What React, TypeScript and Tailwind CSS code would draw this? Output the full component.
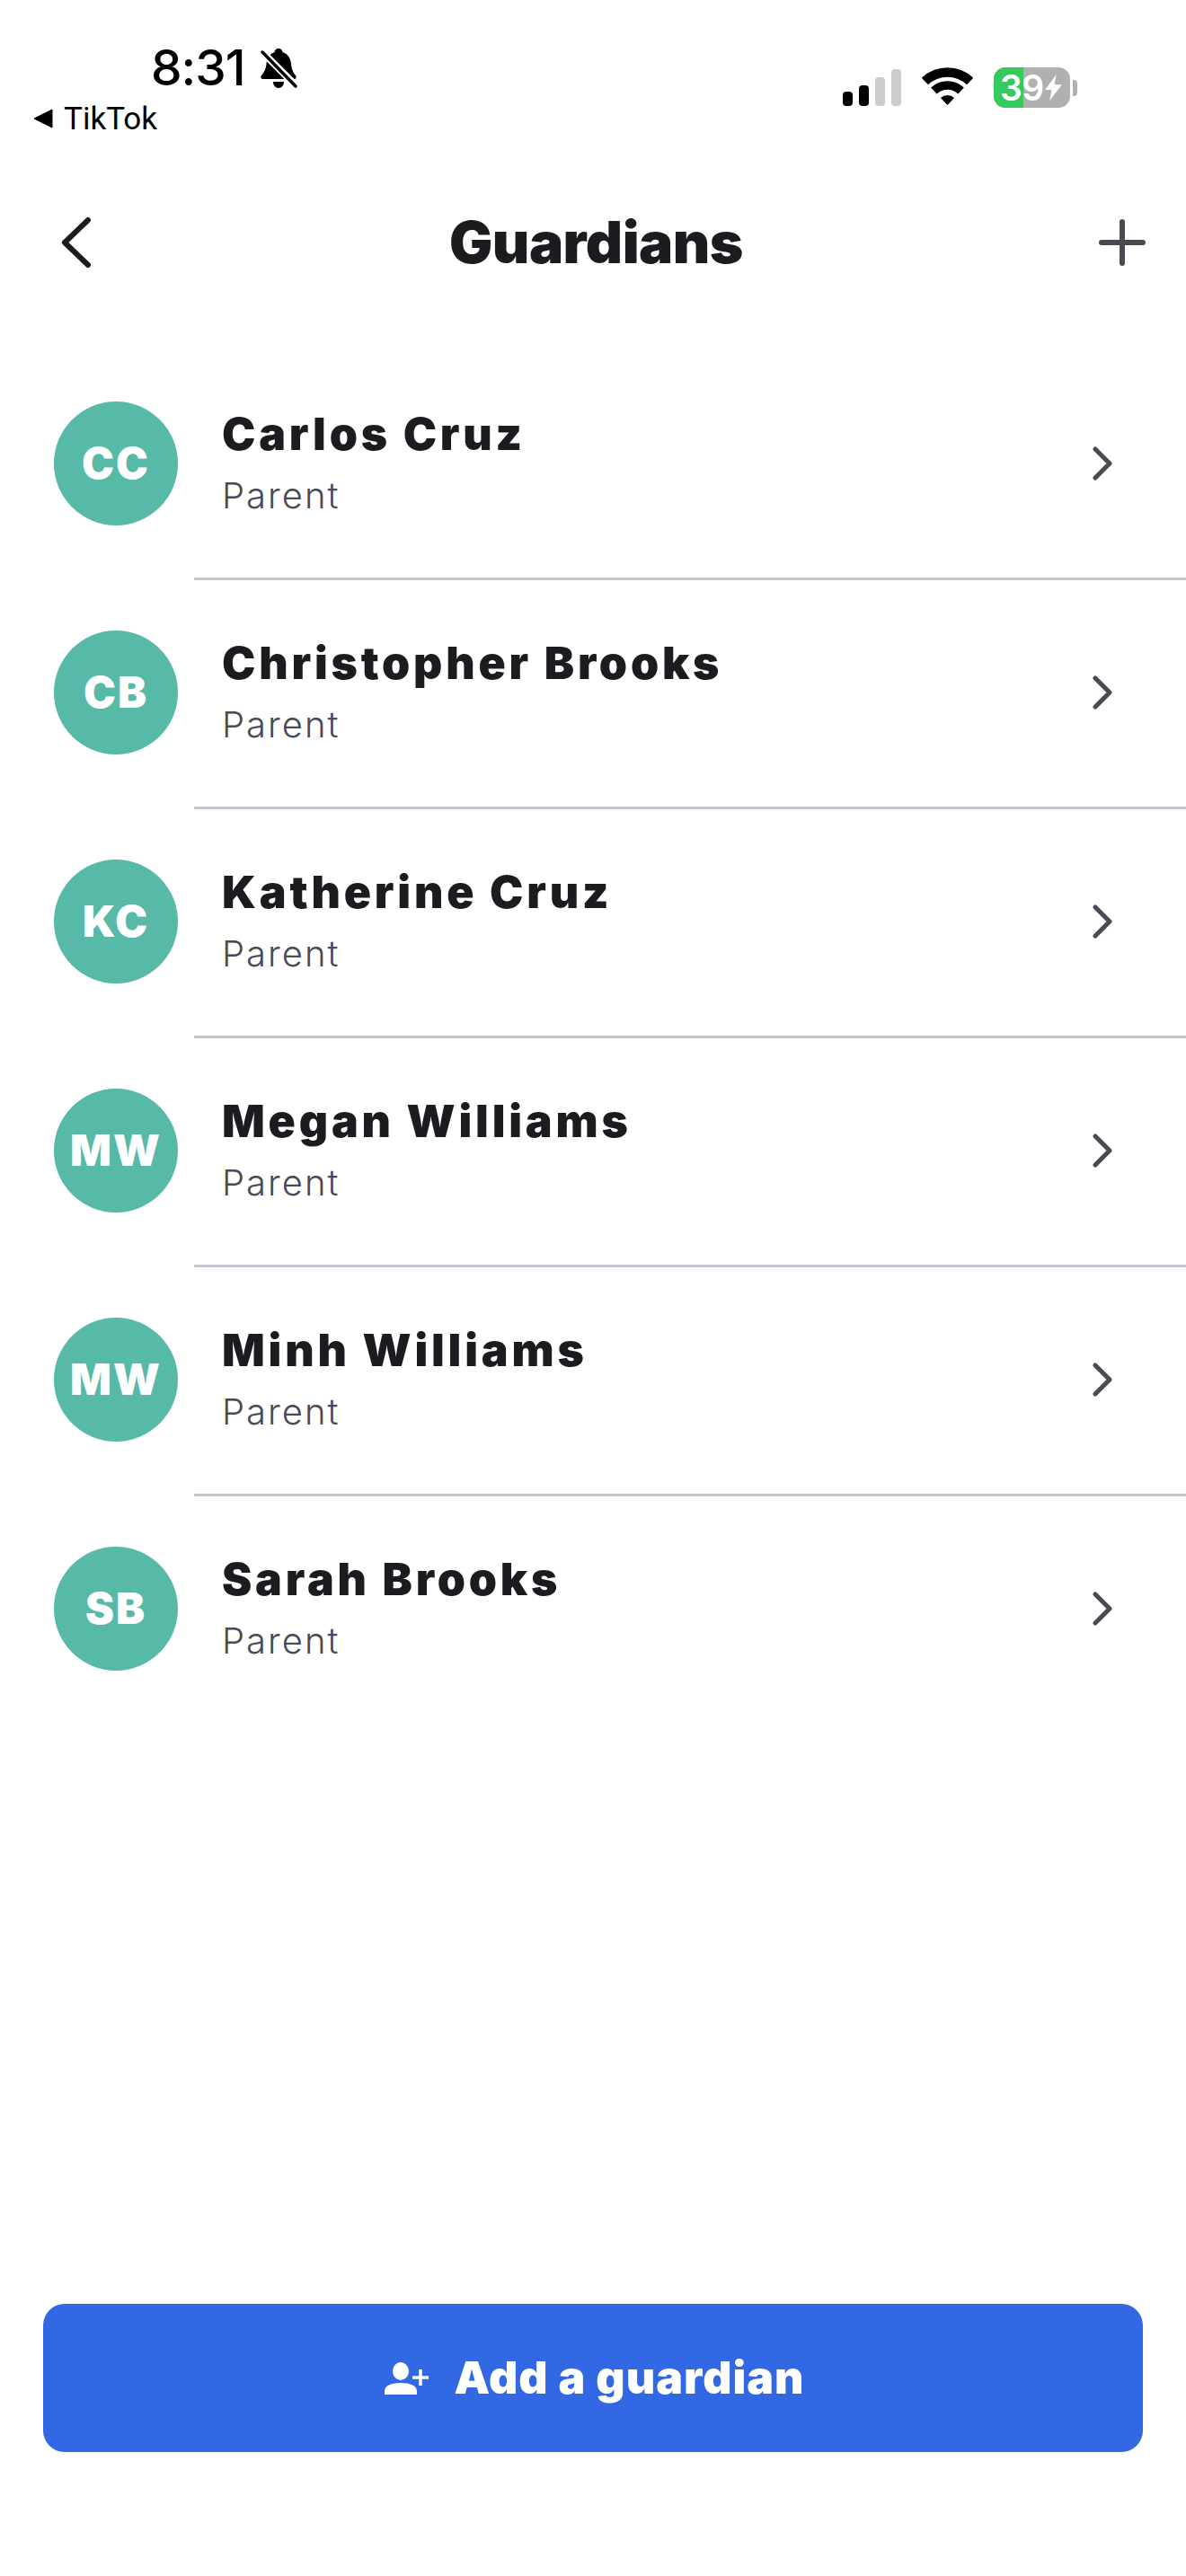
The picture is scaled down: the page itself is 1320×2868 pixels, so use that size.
const people = [
  { initials: "CC", name: "Carlos Cruz" },
  { initials: "CB", name: "Christopher Brooks" },
  { initials: "KC", name: "Katherine Cruz" },
  { initials: "MW", name: "Megan Williams" },
  { initials: "MW", name: "Minh Williams" },
  { initials: "SB", name: "Sarah Brooks" },
];

function Bell() {
  return (
    <svg width="44" height="47" viewBox="0 0 44 47" className="block">
      <path d="M22 2c3 0 4 2 4.500 4 6 2 9 7 9.500 13 .5 6 2 9 5 13 1.500 2 .5 4-2 4H5c-2.500 0-3.500-2-2-4 3-4 5-7 5.500-13C9 13 12 8 17.500 6 18 4 19 2 22 2z" fill="#000" />
      <path d="M16 39h12c0 4-2.500 7-6 7s-6-3-6-7z" fill="#000" />
      <path d="M3 5l38 38" stroke="#fff" strokeWidth="8" />
      <path d="M4 6l37 38" stroke="#000" strokeWidth="3.500" strokeLinecap="round" />
    </svg>
  );
}

function Wifi() {
  return (
    <svg width="57" height="42" viewBox="0 0 57 42" className="block">
      <path d="M3.400 15.500A36.500 36.500 0 0 1 53.600 15.500" fill="none" stroke="#000" strokeWidth="10.500" />
      <path d="M13.400 26A22 22 0 0 1 43.600 26" fill="none" stroke="#000" strokeWidth="9.500" />
      <path d="M28.500 42L20.900 34A11 11 0 0 1 36.100 34Z" fill="#000" />
    </svg>
  );
}

function AddPerson() {
  return (
    <svg width="50" height="36" viewBox="0 0 50 36" fill="#fff" className="block">
      <ellipse cx="18" cy="10" rx="9" ry="10" />
      <path d="M0 36v-4c0-6 8-9 18-9s18 3 18 9v4z" />
      <path d="M31 17h18M40 8v18" stroke="#fff" strokeWidth="3.500" fill="none" />
    </svg>
  );
}

export default function App() {
  return (
    <div className="flex h-[2868px] w-[1320px] flex-col overflow-hidden bg-white font-['Inter',sans-serif] text-[#1b1c20]">
      <div className="flex h-[160px] justify-between">
        <div className="pl-[37px] pt-[42px]">
          <div className="ml-[131px] flex h-[66px] items-center gap-[15px]">
            <span className="text-[55px] font-medium leading-none tracking-[-1px] text-black">8:31</span>
            <Bell />
          </div>
          <div className="mt-[9px] flex h-[30px] items-center gap-[12px]">
            <svg width="22" height="22" viewBox="0 0 22 22" className="block">
              <path d="M21 1v20L1 11z" fill="#000" stroke="#000" strokeLinejoin="round" />
            </svg>
            <span className="font-['Roboto',sans-serif] text-[35px] leading-none text-black">TikTok</span>
          </div>
        </div>
        <div className="mr-[121px] flex items-start gap-[23px] pt-[75px]">
          <div className="flex h-[43px] items-end gap-[7px]">
            <div className="h-[16px] w-[11px] rounded-[4px] bg-black" />
            <div className="h-[23px] w-[11px] rounded-[4px] bg-black" />
            <div className="h-[32px] w-[11px] rounded-[4px] bg-[#cccccc]" />
            <div className="h-[41px] w-[11px] rounded-[4px] bg-[#cccccc]" />
          </div>
          <Wifi />
          <div className="flex items-center gap-[3px]">
            <div className="relative h-[45px] w-[85px] overflow-hidden rounded-[13px] bg-[#b0b0b0]">
              <div className="absolute inset-y-0 left-0 w-[33px] bg-[#36c95c]" />
              <div className="relative flex h-full items-center pl-[7px] text-[39px] font-semibold leading-none tracking-[-0.500px] text-white">
                <span>39</span>
                <svg width="21" height="29" viewBox="0 0 20 36" preserveAspectRatio="none" className="block shrink-0">
                  <path d="M13 0L1 21h7L6 36l13-22h-8z" fill="#fff" />
                </svg>
              </div>
            </div>
            <div className="h-[18px] w-[5px] rounded-r-[4px] bg-[#b0b0b0]" />
          </div>
        </div>
      </div>

      <div className="flex h-[231px] items-start justify-between pl-[64px] pr-[45px] pt-[80px]">
        <svg width="40" height="60" viewBox="0 0 40 60" className="block">
          <path d="M34 5L8 30l26 25" fill="none" stroke="#1b1c20" strokeWidth="6" strokeLinecap="round" strokeLinejoin="round" />
        </svg>
        <h1 className="text-[64px] font-black leading-[60px] tracking-[-0.500px]">Guardians</h1>
        <svg width="52" height="52" viewBox="0 0 52 52" className="mt-[4px] block">
          <path d="M26 3v46M3 26h46" fill="none" stroke="#4a4a55" strokeWidth="6" strokeLinecap="round" />
        </svg>
      </div>

      <div>
        {people.map((p, i) => (
          <div key={i}>
            <div className="flex h-[252px] items-center pl-[60px] pr-[80px]">
              <div className="mb-[2px] flex h-[138px] w-[138px] shrink-0 items-center justify-center rounded-full bg-[#57b9a8] text-[48px] font-black tracking-[2px] text-white">
                {p.initials}
              </div>
              <div className="ml-[49px] flex-1">
                <div className="mt-[-5px] text-[50px] font-black leading-[58px] tracking-[3.800px]">{p.name}</div>
                <div className="mt-[16px] text-[40px] font-light leading-[48px] tracking-[2px] text-[#4a4a55]">Parent</div>
              </div>
              <svg width="26" height="38" viewBox="0 0 26 38" className="mb-[2px] block">
                <path d="M5 3l16 16L5 35" fill="none" stroke="#4a4a55" strokeWidth="5" strokeLinecap="round" strokeLinejoin="round" />
              </svg>
            </div>
            {i < people.length - 1 && <div className="ml-[216px] h-[3px] bg-[#c6c6d2]" />}
          </div>
        ))}
      </div>

      <button className="mx-[48px] mb-[138px] mt-auto flex h-[165px] items-center justify-center gap-[27px] rounded-[24px] bg-[#3268e3] pl-[4px] text-[50px] font-black tracking-[1px] text-white">
        <AddPerson />
        <span>Add a guardian</span>
      </button>
    </div>
  );
}
